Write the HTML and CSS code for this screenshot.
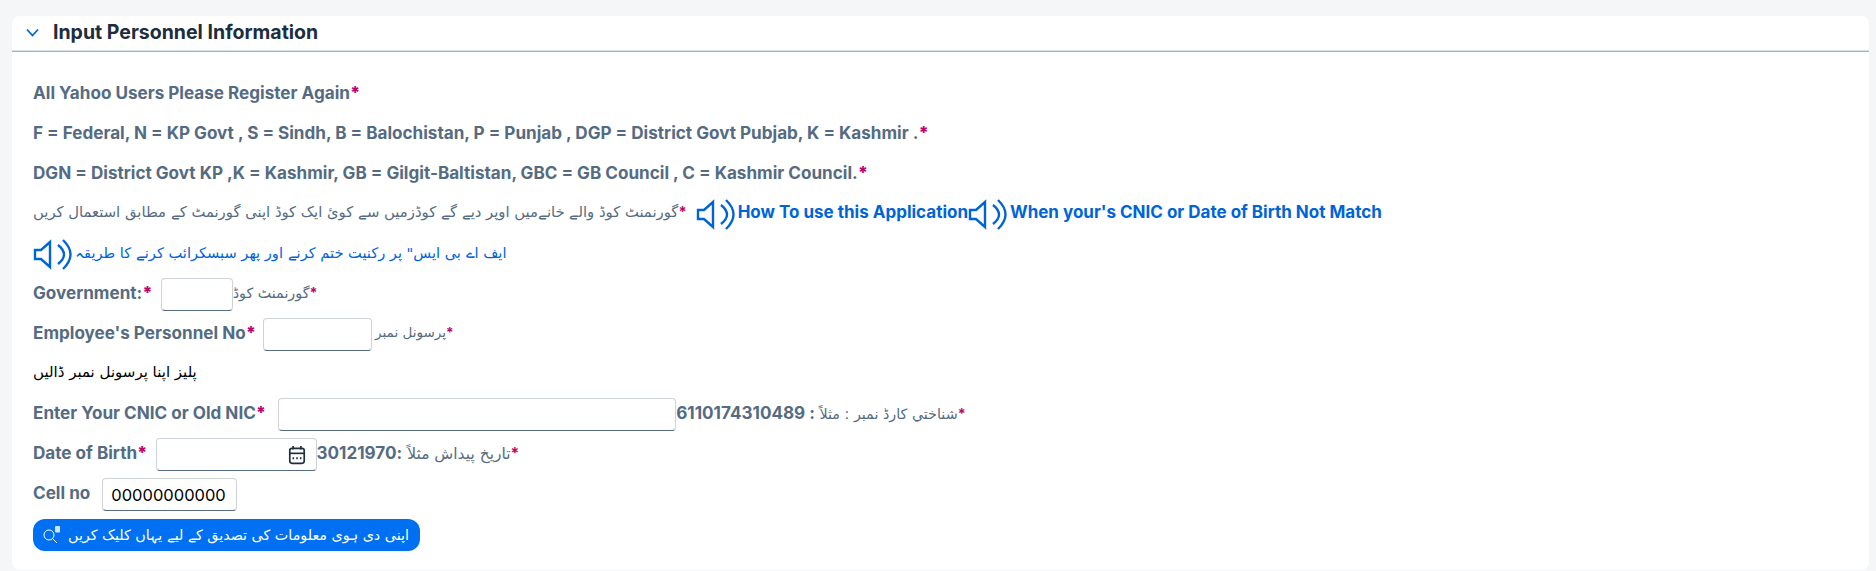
FILE: index.html
```html
<!DOCTYPE html>
<html lang="en">
<head>
  <meta charset="UTF-8">
  <title>Input Personnel Information</title>
  <link rel="stylesheet" href="styles.css">
</head>
<body>
  <section class="panel">
    <header class="panel-head">
      <svg class="chevron" viewBox="0 0 13 9"><path d="M1 1.500 L6.500 7.500 L12 1.500"/></svg>
      <h2>Input Personnel Information</h2>
    </header>
    <div class="panel-body">
      <div class="row"><span class="label">All Yahoo Users Please Register Again<b class="req">*</b></span></div>
      <div class="row"><span class="label">F = Federal, N = KP Govt , S = Sindh, B = Balochistan, P = Punjab , DGP = District Govt Pubjab, K = Kashmir .<b class="req">*</b></span></div>
      <div class="row"><span class="label">DGN = District Govt KP ,K = Kashmir, GB = Gilgit-Baltistan, GBC = GB Council , C = Kashmir Council.<b class="req">*</b></span></div>

      <div class="row">
        <span class="urdu urdu-note" dir="rtl"><b class="req">*</b>گورنمنٹ کوڈ والے خانےمیں اوپر دیے گے کوڈزمیں سے کوئ ایک کوڈ اپنی گورنمٹ کے مطابق استعمال کریں</span>
        <svg class="speaker first" viewBox="0 0 39 31"><path d="M2 11 H8 L17 3 V28 L8 20 H2 Z"/><path d="M25 6 Q37 15.500 25 25"/><path d="M30 1 Q45 15.500 30 30"/></svg>
        <a class="link" href="#">How To use this Application</a>
        <svg class="speaker" viewBox="0 0 39 31"><path d="M2 11 H8 L17 3 V28 L8 20 H2 Z"/><path d="M25 6 Q37 15.500 25 25"/><path d="M30 1 Q45 15.500 30 30"/></svg>
        <a class="link" href="#">When your's CNIC or Date of Birth Not Match</a>
      </div>

      <div class="row">
        <svg class="speaker" viewBox="0 0 39 31"><path d="M2 11 H8 L17 3 V28 L8 20 H2 Z"/><path d="M25 6 Q37 15.500 25 25"/><path d="M30 1 Q45 15.500 30 30"/></svg>
        <a class="urdu urdu-link" href="#" dir="rtl">ایف اے بی ایس" پر رکنیت ختم کرنے اور پھر سبسکرائب کرنے کا طریقہ</a>
      </div>

      <div class="row">
        <span class="label">Government:<b class="req">*</b></span>
        <input class="field field-gov" type="text">
        <span class="urdu urdu-hint-lg" dir="rtl"><b class="req">*</b>گورنمنٹ کوڈ</span>
      </div>
      <div class="row">
        <span class="label">Employee's Personnel No<b class="req">*</b></span>
        <input class="field field-pers" type="text">
        <span class="urdu urdu-hint" dir="rtl"><b class="req">*</b>پرسونل نمبر</span>
      </div>
      <div class="row">
        <span class="urdu urdu-plain" dir="rtl">پلیز اپنا پرسونل نمبر ڈالیں</span>
      </div>
      <div class="row">
        <span class="label">Enter Your CNIC or Old NIC<b class="req">*</b></span>
        <input class="field field-cnic" type="text">
        <span class="urdu urdu-hint-lg" dir="rtl"><b class="req">*</b>شناختي کارڈ نمبر : مثلاً <b class="num">: 6110174310489</b></span>
      </div>
      <div class="row">
        <span class="label">Date of Birth<b class="req">*</b></span>
        <span class="field field-date">
          <input type="text">
          <svg class="calendar" viewBox="0 0 16 18"><path d="M4.500 1 V4 M11.500 1 V4"/><rect x="1.500" y="3" width="13" height="13.500" rx="2"/><path d="M1.500 7.500 H14.500"/><path class="dots" d="M4 12 H5.400 M7.300 12 H8.700 M10.600 12 H12"/></svg>
        </span>
        <span class="urdu urdu-dob" dir="rtl"><b class="req">*</b>تاریخ پیداش مثلاً <b class="num">:30121970</b></span>
      </div>
      <div class="row">
        <span class="label">Cell no</span>
        <input class="field field-cell" type="text" value="00000000000">
      </div>
      <div class="row">
        <button class="verify" type="button">
          <svg class="search" viewBox="0 0 20 20"><circle cx="7" cy="10" r="5"/><path d="M10.500 13.500 L15 18"/><rect class="db" x="13" y="1" width="5" height="6.500" rx="1"/></svg>
          <span dir="rtl">اپنی دی ہوی معلومات کی تصدیق کے لیے یہاں کلیک کریں</span>
        </button>
      </div>
    </div>
  </section>
</body>
</html>
```

FILE: styles.css
```css
body {
  margin: 0;
  padding: 16px 7px 0 12px;
  height: 571px;
  box-sizing: border-box;
  overflow: hidden;
  background: #f5f6f7;
  font-family: Inter, "Liberation Sans", sans-serif;
}
.panel {
  background: #fff;
  border-radius: 8px;
  height: 554px;
}
.panel-head {
  display: flex;
  align-items: center;
  height: 36px;
  box-sizing: border-box;
  padding: 0 0 3px 14px;
  border-bottom: 1px solid #a9b4be;
  box-shadow: 0 -1px 0 #d9dee3 inset;
}
.panel-head h2 {
  margin: 0 0 0 14px;
  font-size: 19.500px;
  font-weight: 700;
  color: #1d2d3e;
}
.chevron {
  width: 13px;
  height: 9px;
  fill: none;
  stroke: #0064d9;
  stroke-width: 1.800;
}
.panel-body {
  padding: 26px 0 0 21px;
}
.row {
  display: flex;
  align-items: center;
  height: 33px;
  margin-bottom: 7px;
  white-space: nowrap;
}
.row > span:not(.field),
.row > a {
  padding-bottom: 5px;
}
.label,
.num {
  font-family: Inter, "Liberation Sans", sans-serif;
  font-size: 17.100px;
  font-weight: 700;
  color: #556b82;
}
.req {
  color: #ba066c;
}
.urdu {
  font-family: "DejaVu Sans", sans-serif;
  color: #556b82;
}
.urdu .req {
  font-family: Inter, sans-serif;
}
.urdu-note {
  font-size: 14.800px;
}
.urdu-plain {
  font-size: 15px;
  color: #000;
}
.urdu-link {
  font-size: 14.600px;
}
.urdu-hint {
  font-size: 13.500px;
}
.urdu-hint-lg {
  font-size: 14.300px;
}
.urdu-dob {
  font-size: 15.500px;
}
.urdu-link,
.link {
  color: #0064d9;
  text-decoration: none;
}
.link {
  font-size: 17px;
  font-weight: 700;
}
.speaker {
  flex: none;
  width: 39px;
  height: 31px;
  margin: 0 3px 0 0;
  fill: none;
  stroke: #0064d9;
  stroke-width: 2.400;
}
.speaker.first {
  margin-left: 9px;
}
.field {
  height: 33px;
  box-sizing: border-box;
  padding: 0 8px;
  background: #fff;
  border: 1px solid #cdd3d9;
  border-bottom-color: #556b81;
  border-radius: 4px;
  font-family: Inter, sans-serif;
  font-size: 16px;
  color: #000;
}
.field-gov {
  width: 72px;
  margin-left: 8px;
}
.field-pers {
  width: 109px;
  margin-left: 7px;
  margin-right: 3px;
}
.field-cnic {
  width: 398px;
  margin-left: 12px;
}
.field-date {
  display: flex;
  align-items: center;
  width: 161px;
  margin-left: 8px;
}
.field-date input {
  flex: 1;
  min-width: 0;
  border: none;
  background: none;
}
.field-cell {
  width: 135px;
  margin-left: 12px;
  font-size: 16.500px;
}
.calendar {
  flex: none;
  width: 18px;
  height: 20px;
  margin-right: 2px;
  fill: none;
  stroke: #1d2d3e;
  stroke-width: 1.500;
}
.calendar .dots {
  stroke-width: 1.800;
}
.verify {
  display: flex;
  align-items: center;
  width: 387px;
  height: 32px;
  padding: 0 0 0 9px;
  border: none;
  border-radius: 12px;
  background: #0070f2;
  color: #fff;
  font-family: "DejaVu Sans", sans-serif;
  font-size: 14.300px;
}
.search {
  flex: none;
  width: 20px;
  height: 20px;
  margin-right: 6px;
  fill: none;
  stroke: #fff;
  stroke-width: 1;
}
.search .db {
  fill: #cfe3fb;
  stroke: none;
}
```
